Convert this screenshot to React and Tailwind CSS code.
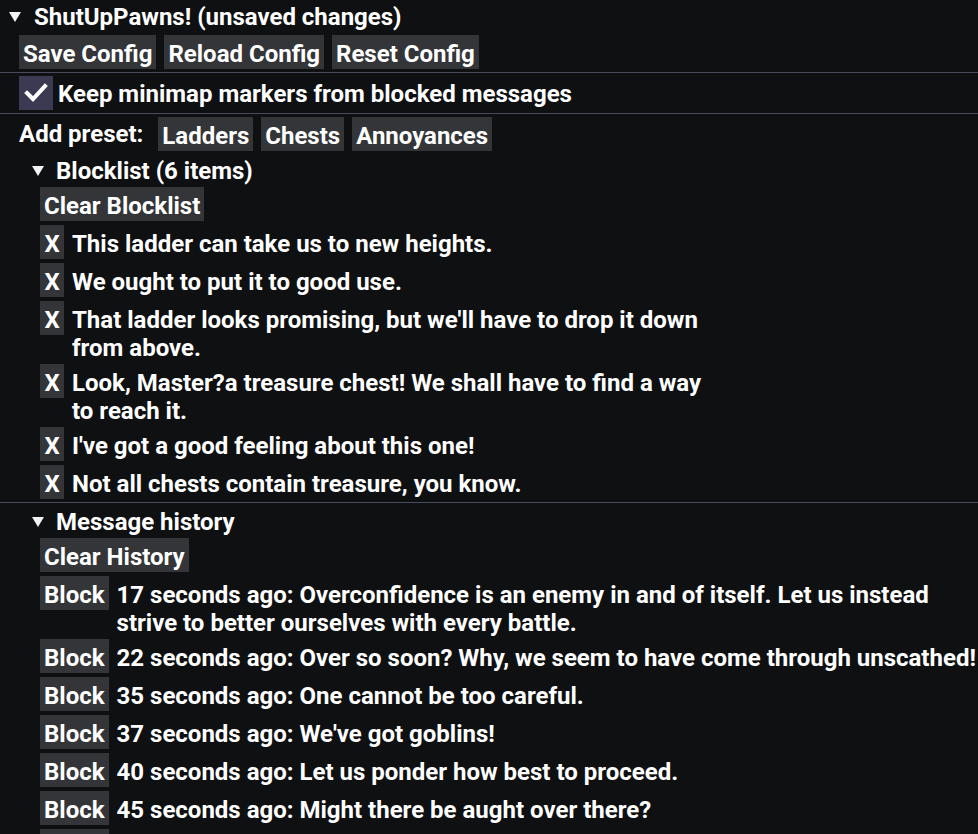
import React from "react";

const blocklist = [
  "This ladder can take us to new heights.",
  "We ought to put it to good use.",
  "That ladder looks promising, but we'll have to drop it down from above.",
  "Look, Master?a treasure chest! We shall have to find a way to reach it.",
  "I've got a good feeling about this one!",
  "Not all chests contain treasure, you know.",
];

const history = [
  "17 seconds ago: Overconfidence is an enemy in and of itself. Let us instead strive to better ourselves with every battle.",
  "22 seconds ago: Over so soon? Why, we seem to have come through unscathed!",
  "35 seconds ago: One cannot be too careful.",
  "37 seconds ago: We've got goblins!",
  "40 seconds ago: Let us ponder how best to proceed.",
  "45 seconds ago: Might there be aught over there?",
  "52 seconds ago: Stay sharp, everyone.",
];

const Btn = ({ children, className = "" }) => (
  <button className={"h-[34px] px-[4px] pt-[5px] pb-[1px] bg-[#333538] text-white leading-[28px] whitespace-nowrap " + className}>
    {children}
  </button>
);

const Arrow = () => (
  <svg width="14" height="12" viewBox="0 0 14 12" className="shrink-0">
    <path d="M1 1 L13 1 L7 11 Z" fill="#f2f2f2" />
  </svg>
);

const Sep = () => <div className="h-px bg-[#4a4a5c] my-[3px]" />;

const TreeNode = ({ label }) => (
  <div className="flex items-center h-[28px] pt-[4px] pl-[31px] gap-[11px]">
    <Arrow />
    <span>{label}</span>
  </div>
);

export default function App() {
  return (
    <div
      className="w-[978px] h-[834px] overflow-hidden bg-[#0f1012] text-white text-[24px] font-bold leading-[28px]"
      style={{ fontFamily: "Roboto, 'Liberation Sans', sans-serif" }}
    >
      <div className="flex items-center h-[31px] pl-[8px] gap-[12px] pt-[3px]">
        <Arrow />
        <span>ShutUpPawns! (unsaved changes)</span>
      </div>
      <div className="flex gap-[8px] pl-[19px] mt-[4px]">
        <Btn>Save Config</Btn>
        <Btn>Reload Config</Btn>
        <Btn>Reset Config</Btn>
      </div>
      <Sep />
      <div className="flex items-center pl-[19px] gap-[5px]">
        <div className="w-[34px] h-[34px] bg-[#3b3a52] flex items-center justify-center">
          <svg width="24" height="20" viewBox="0 0 24 20">
            <path d="M3 10 L9 16 L21 3" fill="none" stroke="#ffffff" strokeWidth="4" strokeLinecap="square" />
          </svg>
        </div>
        <span className="pt-[2px]">Keep minimap markers from blocked messages</span>
      </div>
      <Sep />
      <div className="flex items-center pl-[19px]">
        <span className="mr-[15px]">Add preset:</span>
        <div className="flex gap-[8px]">
          <Btn>Ladders</Btn>
          <Btn>Chests</Btn>
          <Btn>Annoyances</Btn>
        </div>
      </div>
      <div className="mt-[4px]">
        <TreeNode label="Blocklist (6 items)" />
      </div>
      <div className="pl-[40px] mt-[4px] flex flex-col gap-[4px]">
        <div>
          <Btn>Clear Blocklist</Btn>
        </div>
        {blocklist.map((t) => (
          <div key={t} className="flex items-start">
            <Btn className="w-[24px] px-0">X</Btn>
            <span className="ml-[8px] pt-[5px] -mb-[2px] w-[640px]">{t}</span>
          </div>
        ))}
      </div>
      <Sep />
      <TreeNode label="Message history" />
      <div className="pl-[40px] mt-[4px] flex flex-col gap-[4px]">
        <div>
          <Btn>Clear History</Btn>
        </div>
        {history.map((t) => (
          <div key={t} className="flex items-start">
            <Btn>Block</Btn>
            <span className="ml-[8px] pt-[5px] -mb-[2px] flex-1 pr-[2px]">{t}</span>
          </div>
        ))}
      </div>
    </div>
  );
}
